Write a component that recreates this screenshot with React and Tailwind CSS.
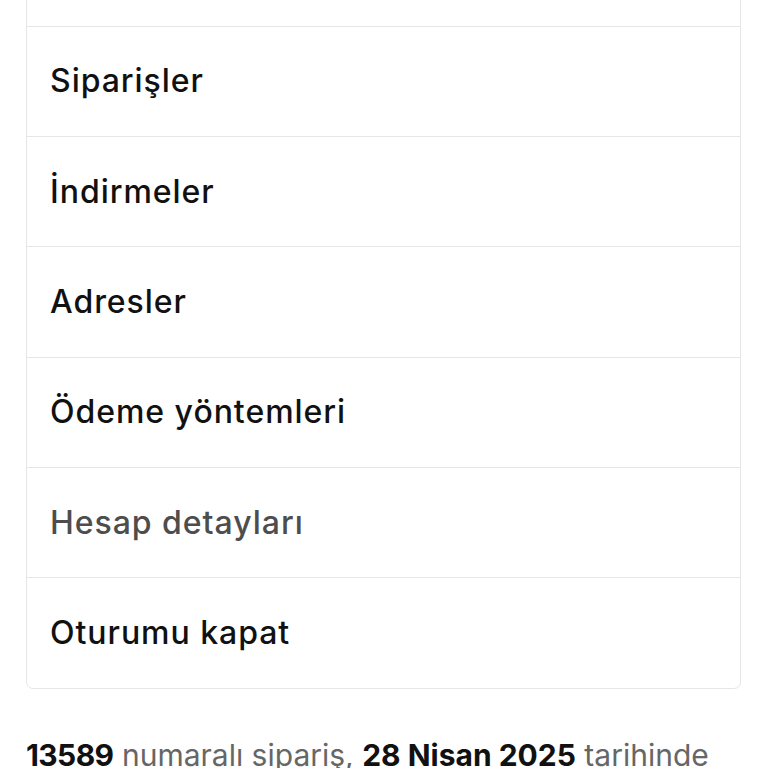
import React from 'react';

const items = [
  { label: 'Başlangıç' },
  { label: 'Siparişler' },
  { label: 'İndirmeler' },
  { label: 'Adresler' },
  { label: 'Ödeme yöntemleri' },
  { label: 'Hesap detayları', active: true },
  { label: 'Oturumu kapat' },
];

const App = () => {
  return (
    <div className="min-h-screen bg-white overflow-hidden" style={{ fontFamily: 'Inter, "Noto Sans", sans-serif' }}>
      <div className="px-[26px] pr-[27px] -mt-[85.6px]">
        {/* Account navigation */}
        <nav className="border border-[#e6e6e6] rounded-[7px] bg-white">
          {items.map((item, i) => (
            <div
              key={item.label}
              className={`h-[110.33px] flex items-center px-[23px] text-[32px] font-medium tracking-[0.03em] ${
                i > 0 ? 'border-t border-[#e6e6e6]' : ''
              } ${item.active ? 'text-[#4d4d4d]' : 'text-[#111111]'}`}
            >
              {item.label}
            </div>
          ))}
        </nav>

        <p className="mt-[43px] text-[30px] leading-[46px] text-[#666666]">
          <span className="font-bold text-[#111111] tracking-[-0.02em]">13589</span> numaralı sipariş,{' '}
          <span className="font-bold text-[#111111]">28 Nisan 2025</span> tarihinde oluşturuldu ve şu anda{' '}
          <span className="font-bold text-[#111111]">Tamamlandı</span> durumunda.
        </p>
      </div>
    </div>
  );
};

export default App;
